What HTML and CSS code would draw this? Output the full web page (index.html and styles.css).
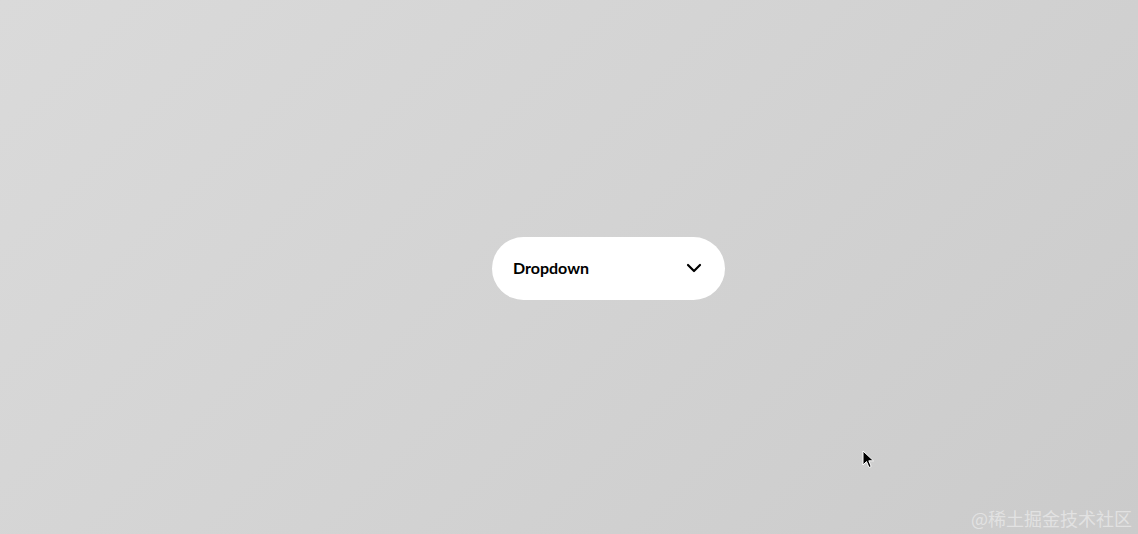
FILE: index.html
```html
<!DOCTYPE html>
<html lang="zh">
<head>
<meta charset="utf-8">
<title>Dropdown</title>
<link rel="stylesheet" href="styles.css">
</head>
<body>
<main class="stage">
  <button class="dropdown" type="button">
    <span class="dropdown-label">Dropdown</span>
    <svg class="chevron" width="16" height="16" viewBox="0 0 16 16" aria-hidden="true">
      <path d="M2 5 L8 11 L14 5" fill="none" stroke="#000" stroke-width="2.2" stroke-linecap="round" stroke-linejoin="round"/>
    </svg>
  </button>
  <svg class="cursor" width="14" height="20" viewBox="0 0 14 20" aria-hidden="true">
    <path d="M1 1 L1 15 L4.5 11.5 L7 17.5 L9.2 16.5 L6.8 10.8 L11.5 10.8 Z" fill="#000" stroke="#fff" stroke-width="1"/>
  </svg>
  <div class="watermark">@稀土掘金技术社区</div>
</main>
</body>
</html>
```

FILE: styles.css
```css
* { box-sizing: border-box; }
html, body {
  margin: 0;
  padding: 0;
  width: 100%;
  height: 100%;
}
body {
  font-family: Lato, "Noto Sans", sans-serif;
}
.stage {
  position: relative;
  width: 100%;
  height: 534px;
  background: linear-gradient(135deg, #dadada 0%, #d3d3d3 50%, #cbcbcb 100%);
  display: flex;
  align-items: center;
  justify-content: center;
  overflow: hidden;
}
.dropdown {
  width: 233px;
  height: 63px;
  margin: 2px 0 0 79px;
  border: none;
  border-radius: 32px;
  background: #fff;
  display: flex;
  align-items: center;
  justify-content: space-between;
  padding: 0 23px 2px 21px;
  font-family: Lato, "Noto Sans", sans-serif;
  font-weight: 700;
  font-size: 16px;
  color: #000;
  cursor: pointer;
}
.dropdown-label {
  letter-spacing: 0;
}
.chevron {
  display: block;
  margin-top: 2px;
}
.cursor {
  position: absolute;
  left: 862px;
  top: 450px;
}
.watermark {
  position: absolute;
  right: 6px;
  bottom: 4px;
  font-family: "Noto Sans CJK SC", "Noto Sans", sans-serif;
  font-size: 18px;
  line-height: 24px;
  color: #e6e6e6;
  opacity: 0.85;
  letter-spacing: 0;
}
```
